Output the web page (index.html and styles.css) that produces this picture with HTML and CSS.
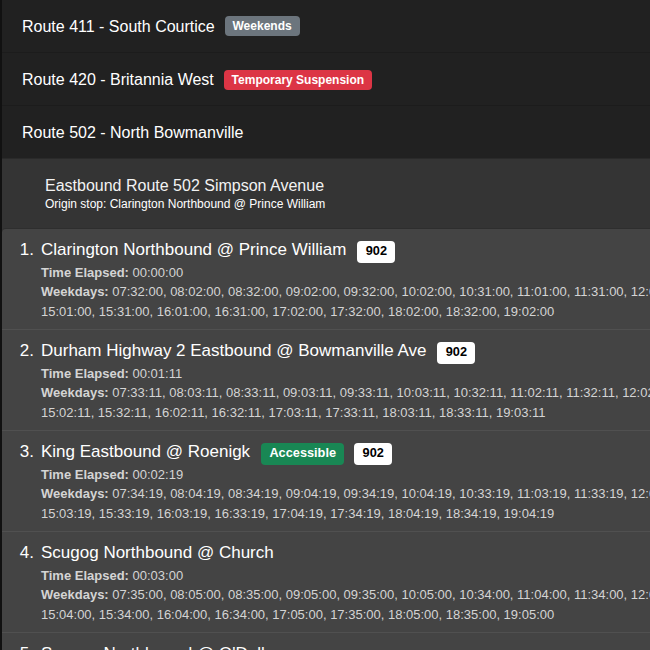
FILE: index.html
```html
<!DOCTYPE html>
<html lang="en">
<head>
<meta charset="utf-8">
<title>Routes</title>
<link rel="stylesheet" href="styles.css">
</head>
<body>
<main class="routes">
  <div class="route"><span>Route 411 - South Courtice</span><span class="badge badge-grey">Weekends</span></div>
  <div class="route"><span>Route 420 - Britannia West</span><span class="badge badge-red">Temporary Suspension</span></div>
  <div class="route route-open"><span>Route 502 - North Bowmanville</span></div>
  <section class="panel">
    <header class="panel-head">
      <div class="panel-title">Eastbound Route 502 Simpson Avenue</div>
      <div class="panel-origin">Origin stop: Clarington Northbound @ Prince William</div>
    </header>
    <ol class="stops">
      <li class="stop">
        <div class="stop-name"><span>Clarington Northbound @ Prince William</span><span class="badge badge-white">902</span></div>
        <div class="stop-line"><b>Time Elapsed:</b> 00:00:00</div>
        <div class="stop-line"><b>Weekdays:</b> 07:32:00, 08:02:00, 08:32:00, 09:02:00, 09:32:00, 10:02:00, 10:31:00, 11:01:00, 11:31:00, 12:01:00, 12:31:00, 13:01:00, 13:31:00,</div>
        <div class="stop-line">15:01:00, 15:31:00, 16:01:00, 16:31:00, 17:02:00, 17:32:00, 18:02:00, 18:32:00, 19:02:00</div>
      </li>
      <li class="stop">
        <div class="stop-name"><span>Durham Highway 2 Eastbound @ Bowmanville Ave</span><span class="badge badge-white">902</span></div>
        <div class="stop-line"><b>Time Elapsed:</b> 00:01:11</div>
        <div class="stop-line"><b>Weekdays:</b> 07:33:11, 08:03:11, 08:33:11, 09:03:11, 09:33:11, 10:03:11, 10:32:11, 11:02:11, 11:32:11, 12:02:11, 12:32:11, 13:02:11, 13:32:11,</div>
        <div class="stop-line">15:02:11, 15:32:11, 16:02:11, 16:32:11, 17:03:11, 17:33:11, 18:03:11, 18:33:11, 19:03:11</div>
      </li>
      <li class="stop">
        <div class="stop-name"><span>King Eastbound @ Roenigk</span><span class="badge badge-green">Accessible</span><span class="badge badge-white">902</span></div>
        <div class="stop-line"><b>Time Elapsed:</b> 00:02:19</div>
        <div class="stop-line"><b>Weekdays:</b> 07:34:19, 08:04:19, 08:34:19, 09:04:19, 09:34:19, 10:04:19, 10:33:19, 11:03:19, 11:33:19, 12:03:19, 12:33:19, 13:03:19, 13:33:19,</div>
        <div class="stop-line">15:03:19, 15:33:19, 16:03:19, 16:33:19, 17:04:19, 17:34:19, 18:04:19, 18:34:19, 19:04:19</div>
      </li>
      <li class="stop">
        <div class="stop-name"><span>Scugog Northbound @ Church</span></div>
        <div class="stop-line"><b>Time Elapsed:</b> 00:03:00</div>
        <div class="stop-line"><b>Weekdays:</b> 07:35:00, 08:05:00, 08:35:00, 09:05:00, 09:35:00, 10:05:00, 10:34:00, 11:04:00, 11:34:00, 12:04:00, 12:34:00, 13:04:00, 13:34:00,</div>
        <div class="stop-line">15:04:00, 15:34:00, 16:04:00, 16:34:00, 17:05:00, 17:35:00, 18:05:00, 18:35:00, 19:05:00</div>
      </li>
      <li class="stop">
        <div class="stop-name"><span>Scugog Northbound @ O'Dell</span></div>
      </li>
    </ol>
  </section>
</main>
</body>
</html>
```
FILE: styles.css
```css
html, body {
  margin: 0;
  height: 650px;
  overflow: hidden;
  background: #111;
}
body {
  font-family: "Liberation Sans", Arial, sans-serif;
  color: #fff;
}
.routes {
  width: 1000px;
  margin-left: 2px;
}
.route {
  padding: 15px 0 13px 20px;
  height: 24px;
  display: flex;
  align-items: center;
  font-size: 16px;
  border-bottom: 1px solid #1c1c1c;
  background: #212121;
}
.route-open {
  border-bottom: 1px solid #2a2a2a;
}
.badge {
  display: inline-block;
  margin-left: 10px;
  padding: .35em .65em;
  border-radius: 4px;
  font-size: .75em;
  line-height: 1;
  font-weight: 700;
  color: #fff;
}
.badge-grey {
  background: #6c757d;
  margin-top: -2px;
  padding-right: 8.8px;
}
.badge-red { background: #dc3545; }
.badge-green { background: #198754; }
.badge-white { background: #fff; color: #000; }
.panel {
  background: #343434;
}
.panel-head {
  padding: 18px 0 16px 43px;
  height: 35px;
}
.panel-title {
  font-size: 16px;
  line-height: 18px;
  color: #f2f2f2;
}
.panel-origin {
  font-size: 12px;
  line-height: 18px;
  color: #fff;
}
.stops {
  margin: 0;
  padding: 0;
  list-style: none;
  background: #444;
  border-top: 1px solid #2e2e2e;
  border-top-left-radius: 4px;
  counter-reset: stop;
}
.stop {
  counter-increment: stop;
  position: relative;
  padding: 8px 0 8px 39px;
  border-bottom: 1px solid #505050;
}
.stop::before {
  content: counter(stop) ".";
  position: absolute;
  left: 0;
  width: 32px;
  top: 8px;
  text-align: right;
  font-size: 17px;
  line-height: 25.5px;
}
.stop-name {
  display: flex;
  align-items: center;
  font-size: 17px;
  line-height: 25.5px;
  height: 25.5px;
}
.stop-name .badge {
  margin-top: 4px;
  margin-left: 11px;
}
.stop-name .badge + .badge {
  margin-left: 10px;
}
.stop-line {
  font-size: 13px;
  line-height: 19.5px;
  color: #d4d4d4;
  white-space: nowrap;
}
```
